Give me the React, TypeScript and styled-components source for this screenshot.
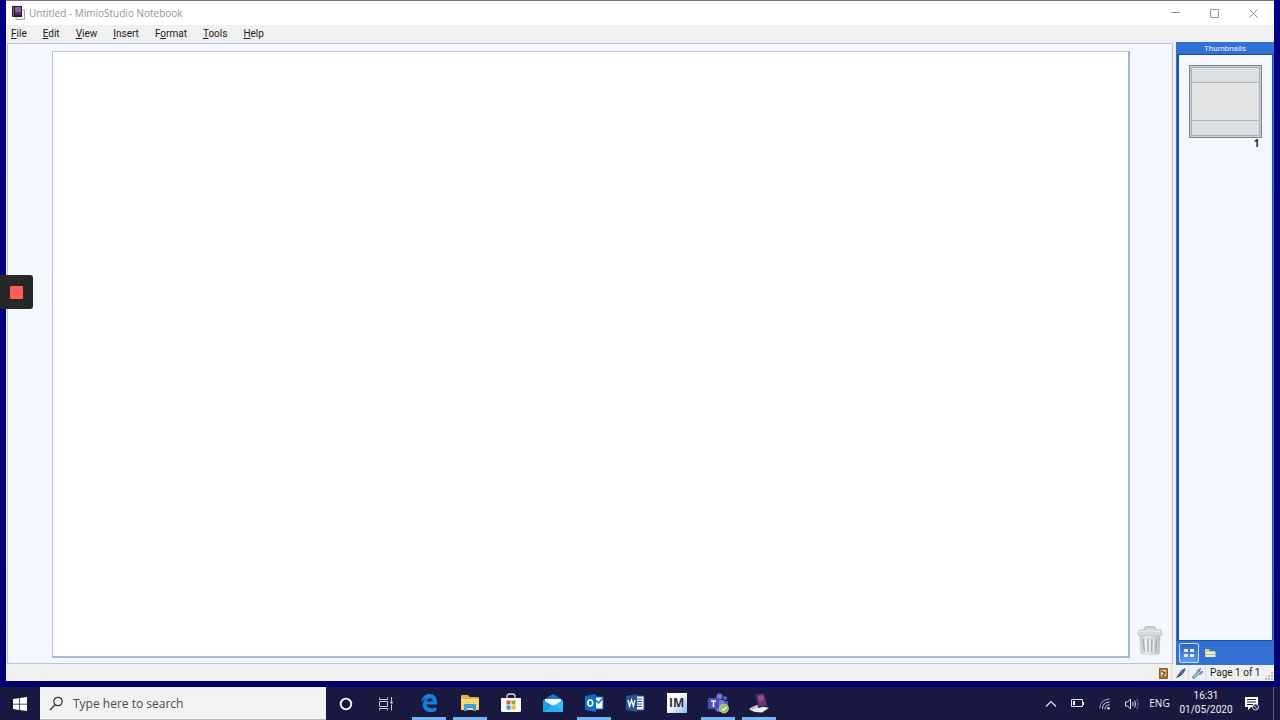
import React from 'react';
import styled, { createGlobalStyle } from 'styled-components';

const GlobalStyle = createGlobalStyle`
  *, *::before, *::after { box-sizing: border-box; }
  body { margin: 0; background: #000080; font-family: "Open Sans", "Noto Sans", sans-serif; }
  button { font: inherit; color: inherit; border: 0; padding: 0; background: none; }
  svg { display: block; flex: none; }
`;

const Desktop = styled.div`
  display: flex;
  flex-direction: column;
  height: 100vh;
  overflow: hidden;
  background: linear-gradient(#000086, #00007c 60%, #000070);
`;

const AppWindow = styled.main`
  flex: 1;
  min-height: 0;
  display: flex;
  flex-direction: column;
  margin: 0 6px 6px;
  border-top: 1px solid #77718a;
  background: #f0f0f0;
`;

const TitleBar = styled.header`
  flex: none;
  display: flex;
  align-items: center;
  height: 24px;
  padding: 0 1px 0 6px;
  background: #fff;
`;

const Title = styled.h1`
  flex: 1;
  margin: 0 0 0 3px;
  font: 400 10px/16px "Open Sans", sans-serif;
  color: #949494;
`;

const CaptionButton = styled.button`
  display: grid;
  place-items: center;
  width: 39px;
  height: 24px;
`;

const MenuBar = styled.nav`
  flex: none;
  display: flex;
  align-items: center;
  gap: 16px;
  height: 17px;
  padding-left: 5px;
`;

const MenuItem = styled.button`
  font: 400 10px/16px Roboto, sans-serif;
  color: #1c1c1c;
  u { text-underline-offset: 1px; }
`;

const Body = styled.div`
  flex: 1;
  min-height: 0;
  display: flex;
`;

const Workspace = styled.section`
  flex: 1;
  display: flex;
  margin: 1px 3px 1px 1px;
  border: 1px solid #b5c4e6;
  background: #f4f8fe;
`;

const Sheet = styled.div`
  flex: 1;
  margin: 7px 0 5px 44px;
  border: 1px solid #b3c3de;
  border-right: 2px solid #9fb5dc;
  border-bottom: 2px solid #a5b9dc;
  background: #fff;
`;

const Gutter = styled.div`
  display: flex;
  align-items: flex-end;
  width: 42px;
  padding: 0 0 6px 7px;
`;

const Panel = styled.aside`
  flex: none;
  display: flex;
  flex-direction: column;
  width: 98px;
  padding: 0 1px;
  background: #3370d4;
`;

const PanelTitle = styled.h2`
  height: 12px;
  margin: 0;
  text-align: center;
  font: 400 8px/14px Roboto, sans-serif;
  color: #f0f6ff;
`;

const PageList = styled.div`
  flex: 1;
  padding: 10px;
  border: 1px solid #2450a8;
  border-left-width: 2px;
  border-top-color: #2349a0;
  background: #f4f8fe;
`;

const Thumb = styled.button`
  display: block;
  width: 73px;
  text-align: right;
  font: 700 10px/10px "Open Sans", sans-serif;
  color: #1c1c1c;
`;

const ThumbFrame = styled.span`
  display: block;
  height: 73px;
  padding: 1px;
  border: 1px solid #7b8085;
  background: #cfd3d6;
`;

const ThumbPage = styled.span`
  display: grid;
  grid-template-rows: 15px 1fr 15px;
  height: 100%;
  border: 1px solid #9fb0bd;
  background: #e5e5e5;
`;

const ThumbBand = styled.span<{ $edge: 'top' | 'bottom' }>`
  background: #dbdfe2;
  grid-row: ${(p) => (p.$edge === 'top' ? 1 : 3)};
  border-${(p) => (p.$edge === 'top' ? 'bottom' : 'top')}: 1px solid #a9b9c6;
`;

const PanelTabs = styled.div`
  flex: none;
  display: flex;
  align-items: center;
  gap: 1px;
  height: 24px;
  padding-left: 2px;
`;

const PanelTab = styled.button<{ $active?: boolean }>`
  display: grid;
  place-items: center;
  width: 20px;
  height: 20px;
  border: 1px solid ${(p) => (p.$active ? '#c3dafa' : 'transparent')};
  border-radius: 2px;
  background: ${(p) => (p.$active ? 'linear-gradient(#2f63bd, #5f9cec)' : 'none')};
`;

const StatusBar = styled.footer`
  flex: none;
  display: flex;
  align-items: center;
  justify-content: flex-end;
  height: 16px;
`;

const StatusCell = styled.span`
  display: grid;
  place-items: center;
  width: 17px;
  height: 14px;
  border-right: 1px solid #dcdcdc;
`;

const PageCount = styled.span`
  width: 56px;
  padding-left: 4px;
  white-space: nowrap;
  font: 400 10px/14px Roboto, sans-serif;
  color: #1c1c1c;
`;

const Recorder = styled.button`
  position: absolute;
  left: 0;
  top: 275px;
  display: grid;
  place-items: center;
  width: 33px;
  height: 34px;
  border-radius: 0 3px 3px 0;
  background: #262827;
`;

const RecordMark = styled.span`
  width: 13px;
  height: 13px;
  border-radius: 1px;
  background: #ff5c5c;
`;

const Taskbar = styled.footer`
  flex: none;
  display: flex;
  height: 33px;
  background: #181840;
  color: #f0f0f6;
`;

const TaskButton = styled.button`
  display: grid;
  place-items: center;
  width: 40px;
`;

const Search = styled.label`
  display: flex;
  align-items: center;
  gap: 9px;
  width: 286px;
  padding-left: 9px;
  border-bottom: 1px solid #b8b8b8;
  background: #f2f2f2;
`;

const SearchInput = styled.input`
  flex: 1;
  min-width: 0;
  padding: 2px 0 0;
  border: 0;
  outline: 0;
  background: none;
  font: 400 12px/18px "Open Sans", sans-serif;
  &::placeholder { color: #4a4a4a; opacity: 1; }
`;

const AppStrip = styled.nav`
  display: flex;
  width: 372px;
  margin-left: 2px;
`;

const AppButton = styled.button<{ $running?: boolean }>`
  flex: 1;
  display: flex;
  flex-direction: column;
  align-items: center;
  justify-content: space-between;
  padding-top: 5px;
  &::after {
    content: '';
    width: 34px;
    height: 3px;
    background: ${(p) => (p.$running ? '#76b4f5' : 'transparent')};
  }
`;

const Tray = styled.div`
  display: flex;
  align-items: stretch;
  margin-left: auto;
  padding-right: 3px;
`;

const TrayButton = styled.button<{ $w?: number }>`
  display: grid;
  place-items: center;
  width: ${(p) => p.$w ?? 27}px;
  font: 400 10px/15px "Open Sans", sans-serif;
`;

const Clock = styled.time`
  width: 64px;
  padding-top: 2px;
  text-align: center;
  font: 400 10px/14px Roboto, sans-serif;
`;

const ShowDesktop = styled.button`
  width: 4px;
  margin-left: 8px;
  border-left: 1px solid #55557a;
`;

const Tile = ({ children, size = 22 }: { children: React.ReactNode; size?: number }) => (
  <svg width={size} height={size} viewBox="0 0 22 22" aria-hidden="true">{children}</svg>
);

const NotebookIcon = () => (
  <svg width="14" height="14" viewBox="0 0 14 14" aria-hidden="true">
    <path d="M4 4h8.500v9.500H4z" fill="#eee" stroke="#a9a6b0" />
    <path d="M0 1q0-1 1-1h9v11H1q-1 0-1-1z" fill="#291c35" />
    <path d="M3 1h6v5H3z" fill="#89639b" />
    <path d="M3 6h6v3H3z" fill="#513663" />
    <path d="M1.500 1v9" stroke="#776586" />
  </svg>
);

const TrashIcon = () => (
  <svg width="26" height="32" viewBox="0 0 26 32" aria-hidden="true">
    <defs>
      <linearGradient id="bin" x1="0" x2="1">
        <stop offset="0" stopColor="#c3c8c9" />
        <stop offset=".35" stopColor="#e7eaea" />
        <stop offset="1" stopColor="#bcc1c3" />
      </linearGradient>
    </defs>
    <path d="M8 4V3.500Q8 2 10 2h6q2 0 2 1.500V4" fill="none" stroke="#b0b5b6" strokeWidth="1.300" />
    <path d="M2.500 10h21l-1 19q-9.500 2.500-19 0z" fill="url(#bin)" />
    <path d="M2 5q11-2 22 0l1 5.500H1z" fill="#d6dadb" stroke="#bcc2c4" strokeWidth=".7" />
    <path d="M3 6.500q10-1.500 20 0" stroke="#f2f4f4" fill="none" />
    <path d="M6.500 14l.8 12M11 14l.2 13M15 14l-.2 13M19.500 14l-.8 12" stroke="#a0a7a9" strokeWidth="1.300" />
    <path d="M8 14l.6 12M12.500 14v13M16.500 14l-.3 12.500" stroke="#f3f5f5" />
  </svg>
);

const EdgeIcon = () => (
  <Tile>
    <path d="M3 10.500C3.800 5.200 7 2 11.300 2c5 0 7.800 3.400 7.800 8.300v2.200H8.700c.2 2.500 2.300 3.800 5 3.800 1.800 0 3.400-.4 4.700-1.300v3.700c-1.600.9-3.500 1.300-5.700 1.300-4.800 0-8-2.700-8-7.300 0-3 1.500-5.300 4.200-6.500C6.300 6.700 4.400 8.300 3 10.500zM8.800 9.500h6c0-2-.9-3.200-2.800-3.200-1.700 0-2.900 1.200-3.200 3.200z" fill="#1681dc" />
  </Tile>
);

const ExplorerIcon = () => (
  <Tile>
    <path d="M2 4q0-1 1-1h6l1.500 2H19q1 0 1 1v11H2z" fill="#e8b33f" />
    <path d="M2 7h18v11H2z" fill="#fbd56f" />
    <path d="M2 7h18v1H2z" fill="#ffe49a" />
    <path d="M5 19v-6q0-1 1-1h10q1 0 1 1v6h-3v-3H8v3z" fill="#3f9fdc" />
  </Tile>
);

const StoreIcon = () => (
  <Tile>
    <path d="M7 7V4.500Q7 2 9.500 2h3Q15 2 15 4.500V7" fill="none" stroke="#d6d6df" strokeWidth="1.300" />
    <path d="M1 6h20v12.500q0 1.500-1.500 1.500h-17Q1 20 1 18.500z" fill="#fafafa" />
    <path d="M6.500 8.500h4v4h-4z" fill="#e9572f" />
    <path d="M11.500 8.500h4v4h-4z" fill="#83b735" />
    <path d="M6.500 13.500h4v4h-4z" fill="#2b9fe0" />
    <path d="M11.500 13.500h4v4h-4z" fill="#f9b52d" />
  </Tile>
);

const MailIcon = () => (
  <Tile>
    <path d="M1 8l10-6 10 6v11H1z" fill="#1478c4" />
    <path d="M3 7h16v7H3z" fill="#f4f9fd" />
    <path d="M1 8l10 6-9 6H1z" fill="#1b9ce2" />
    <path d="M21 8l-10 6 9 6h1z" fill="#36bdf2" />
    <path d="M1 20l10-7 10 7z" fill="#28b0ee" />
  </Tile>
);

const OutlookIcon = () => (
  <Tile>
    <path d="M10 5h10v12H10z" fill="#f5f9fd" stroke="#0c72c6" />
    <path d="M10.500 6l5 5 4.500-5" fill="none" stroke="#0c72c6" strokeWidth="1.500" />
    <path d="M2 4l11-2v18L2 18z" fill="#0d70c4" />
    <ellipse cx="7.300" cy="11" rx="2.400" ry="3" fill="none" stroke="#fff" strokeWidth="1.600" />
  </Tile>
);

const WordIcon = () => (
  <Tile>
    <path d="M11 4h9v14h-9z" fill="#f7f9fc" stroke="#2b579a" />
    <path d="M12 7h6M12 9.500h6M12 12h6M12 14.500h6" stroke="#2b579a" />
    <path d="M2 4l11-2v18L2 18z" fill="#295293" />
    <path d="M4 8l1.600 6.200L7.500 8l1.900 6.200L11 8" fill="none" stroke="#fff" strokeWidth="1.300" />
  </Tile>
);

const ImBadge = styled.span`
  display: grid;
  place-items: center;
  width: 20px;
  height: 20px;
  margin-top: 1px;
  background: linear-gradient(135deg, #fff 40%, #8fb2e8);
  font: 700 12px/20px "Open Sans", sans-serif;
  color: #2d2d3c;
`;

const TeamsIcon = () => (
  <Tile>
    <circle cx="18" cy="6" r="2" fill="#5b64c4" />
    <circle cx="12.500" cy="4.500" r="3" fill="#7178d6" />
    <path d="M15 9h6v6q-1 3-5 3z" fill="#4c56b5" />
    <path d="M7 8h10v7q-1 5-5 5-4-1-5-5z" fill="#7178d6" />
    <rect x="1" y="6" width="11" height="11" rx="1" fill="#4850b4" />
    <path d="M4 9h5M6.500 9v6" stroke="#fff" strokeWidth="1.500" />
    <circle cx="17" cy="16.500" r="4.500" fill="#92c353" stroke="#e5f0d3" strokeWidth=".6" />
    <path d="M14.800 16.600l1.600 1.600 3-3.200" fill="none" stroke="#fff" strokeWidth="1.300" />
  </Tile>
);

const MimioIcon = () => (
  <Tile>
    <path d="M1 17l8-4 12 3-7 4.500q-9 0-13-3.500z" fill="#f0eef2" />
    <path d="M2 16l7-3v3l-5 2z" fill="#c6c2cd" />
    <path d="M7 2.500L16 1l4 13-10 2z" fill="#472354" />
    <path d="M9 3.500L15.500 2.300l3 10.500-7.500 1.500z" fill="#6b3674" />
    <path d="M10 4l5-1 1.500 5-5.500 2z" fill="#85508c" />
  </Tile>
);

const menus: [string, string, string][] = [
  ['', 'F', 'ile'], ['', 'E', 'dit'], ['', 'V', 'iew'], ['', 'I', 'nsert'],
  ['F', 'o', 'rmat'], ['', 'T', 'ools'], ['', 'H', 'elp'],
];

const apps: { name: string; icon: React.ReactNode; running?: boolean }[] = [
  { name: 'Microsoft Edge', icon: <EdgeIcon />, running: true },
  { name: 'File Explorer', icon: <ExplorerIcon />, running: true },
  { name: 'Microsoft Store', icon: <StoreIcon /> },
  { name: 'Mail', icon: <MailIcon /> },
  { name: 'Outlook', icon: <OutlookIcon />, running: true },
  { name: 'Word', icon: <WordIcon /> },
  { name: 'IM', icon: <ImBadge>IM</ImBadge> },
  { name: 'Teams', icon: <TeamsIcon />, running: true },
  { name: 'MimioStudio', icon: <MimioIcon />, running: true },
];

export default function App() {
  return (
    <Desktop>
      <GlobalStyle />
      <AppWindow>
        <TitleBar>
          <NotebookIcon />
          <Title>Untitled - MimioStudio Notebook</Title>
          <CaptionButton aria-label="Minimize">
            <svg width="9" height="9" viewBox="0 0 9 9"><path d="M0 3.500h9" stroke="#999" /></svg>
          </CaptionButton>
          <CaptionButton aria-label="Maximize">
            <svg width="9" height="9" viewBox="0 0 9 9"><path d="M.5 .5h8v8h-8z" fill="none" stroke="#999" /></svg>
          </CaptionButton>
          <CaptionButton aria-label="Close">
            <svg width="9" height="9" viewBox="0 0 9 9"><path d="M.5 .5l8 8M8.500 .5l-8 8" stroke="#888" /></svg>
          </CaptionButton>
        </TitleBar>
        <MenuBar>
          {menus.map(([before, key, after]) => (
            <MenuItem key={before + key + after}>{before}<u>{key}</u>{after}</MenuItem>
          ))}
        </MenuBar>
        <Body>
          <Workspace>
            <Sheet />
            <Gutter><TrashIcon /></Gutter>
          </Workspace>
          <Panel>
            <PanelTitle>Thumbnails</PanelTitle>
            <PageList>
              <Thumb>
                <ThumbFrame>
                  <ThumbPage>
                    <ThumbBand $edge="top" />
                    <ThumbBand $edge="bottom" />
                  </ThumbPage>
                </ThumbFrame>
                1&nbsp;
              </Thumb>
            </PageList>
            <PanelTabs>
              <PanelTab $active aria-label="Thumbnails">
                <svg width="10" height="10" viewBox="0 0 10 10">
                  <path d="M0 1h4v3H0zM6 1h4v3H6zM0 6h4v3H0zM6 6h4v3H6z" fill="#e6ecd9" />
                </svg>
              </PanelTab>
              <PanelTab aria-label="Gallery">
                <svg width="11" height="10" viewBox="0 0 11 10">
                  <path d="M0 1h4l1 2h5v6H0z" fill="#d9c98a" />
                  <path d="M1 4h9.500v5H1z" fill="#f2ecc9" />
                  <path d="M1 6.500h9.500" stroke="#a4b8bd" />
                </svg>
              </PanelTab>
            </PanelTabs>
          </Panel>
        </Body>
        <StatusBar>
          <StatusCell>
            <svg width="9" height="11" viewBox="0 0 9 11">
              <path d="M.5 .5h8v10h-8z" fill="#b5772e" stroke="#8b5b25" />
              <path d="M2 2h5v6H2z" fill="#ead5a8" />
              <path d="M2.500 3l3.500 2-2.500 3" fill="none" stroke="#50413a" strokeWidth="1.200" />
            </svg>
          </StatusCell>
          <StatusCell>
            <svg width="11" height="11" viewBox="0 0 11 11">
              <path d="M10 .5Q6 2 3.500 7l1.500 1Q9.500 5 10 .5z" fill="#4c74b8" stroke="#27406e" strokeWidth=".8" />
              <path d="M3.500 7L.5 10.500 5 8" fill="#222" />
            </svg>
          </StatusCell>
          <StatusCell>
            <svg width="11" height="11" viewBox="0 0 11 11">
              <path d="M9 .7L7 2.800l1 1.400 2.500-.8Q10.300 6 8 6.300q-.8.100-1.400-.2L2.500 10.300q-1 .5-1.700-.3-.5-.8 0-1.500L5 4.600Q4.700 1.400 9 .7z" fill="#a6c3e6" stroke="#3c5f8a" strokeWidth=".8" />
            </svg>
          </StatusCell>
          <PageCount>Page 1 of 1</PageCount>
          <svg width="12" height="15" viewBox="0 0 12 15" aria-hidden="true">
            <path d="M9 6h2v2H9zM9 9h2v2H9zM6 9h2v2H6zM9 12h2v2H9zM6 12h2v2H6zM3 12h2v2H3z" fill="#b9b9b9" />
          </svg>
        </StatusBar>
      </AppWindow>

      <Taskbar>
        <TaskButton aria-label="Start">
          <svg width="14" height="14" viewBox="0 0 14 14">
            <path d="M0 2l6-.8v5.500H0zM6.700 1.100L14 0v6.700H6.700zM0 7.400h6v5.500L0 12zM6.700 7.400H14V14l-7.300-1z" fill="#fff" />
          </svg>
        </TaskButton>
        <Search>
          <svg width="15" height="15" viewBox="0 0 15 15" aria-hidden="true">
            <circle cx="9" cy="5.500" r="4.200" fill="none" stroke="#333" strokeWidth="1.200" />
            <path d="M6 8.800L1 14" stroke="#333" strokeWidth="1.300" />
          </svg>
          <SearchInput aria-label="Search" placeholder="Type here to search" />
        </Search>
        <TaskButton aria-label="Cortana">
          <svg width="14" height="14" viewBox="0 0 14 14">
            <circle cx="7" cy="7" r="5.300" fill="none" stroke="#fff" strokeWidth="1.800" />
          </svg>
        </TaskButton>
        <TaskButton aria-label="Task view">
          <svg width="14" height="14" viewBox="0 0 14 14" fill="none" stroke="#c9c9d6">
            <path d="M.5 .5v2h8v-2M.5 4.500h8v5h-8zM.5 13.500v-2h8v2M12.500 0v4M12.500 7.500v6" />
            <path d="M11.500 4.500h2v2h-2z" fill="#fff" stroke="none" />
          </svg>
        </TaskButton>
        <AppStrip>
          {apps.map((app) => (
            <AppButton key={app.name} $running={app.running} aria-label={app.name}>{app.icon}</AppButton>
          ))}
        </AppStrip>
        <Tray>
          <TrayButton aria-label="Show hidden icons">
            <svg width="12" height="8" viewBox="0 0 12 8"><path d="M1 6.500l5-5 5 5" fill="none" stroke="#e4e4ee" strokeWidth="1.200" /></svg>
          </TrayButton>
          <TrayButton aria-label="Battery">
            <svg width="13" height="9" viewBox="0 0 13 9">
              <path d="M.5 .5h11v7H.5z" fill="none" stroke="#e4e4ee" />
              <path d="M2 2h2v4H2zM12 3h1v3h-1z" fill="#fff" />
            </svg>
          </TrayButton>
          <TrayButton aria-label="Network">
            <svg width="12" height="12" viewBox="0 0 12 12" fill="none" stroke="#d5d5e2">
              <path d="M.8 10.500Q1 1.500 10.500 1.200" stroke="#a5a5bb" />
              <path d="M3.400 11Q3.500 4.300 10.500 4M6 11.300Q6.200 7 10.500 6.700" />
              <circle cx="9.500" cy="10.200" r="1.200" fill="#fff" stroke="none" />
            </svg>
          </TrayButton>
          <TrayButton aria-label="Volume">
            <svg width="14" height="12" viewBox="0 0 14 12" fill="none" stroke="#e4e4ee">
              <path d="M.5 4h2l3-3v10l-3-3h-2z" />
              <path d="M7.500 4q1.300 2 0 4M9.500 2.500q2.200 3.500 0 7" />
              <path d="M11.500 1q3.200 5 0 10" stroke="#77779a" />
            </svg>
          </TrayButton>
          <TrayButton $w={29}>ENG</TrayButton>
          <Clock>16:31<br />01/05/2020</Clock>
          <TrayButton aria-label="Notifications">
            <svg width="15" height="15" viewBox="0 0 15 15">
              <path d="M1 1h13v10H7l-3 3v-3H1z" fill="#fff" />
              <path d="M3 3.500h9M3 6h9M3 8.500h6" stroke="#181840" />
              <circle cx="11.500" cy="11" r="3" fill="#181840" stroke="#fff" strokeWidth=".8" />
              <path d="M10 9.500l3 3" stroke="#fff" />
            </svg>
          </TrayButton>
          <ShowDesktop aria-label="Show desktop" />
        </Tray>
      </Taskbar>

      <Recorder aria-label="Stop recording"><RecordMark /></Recorder>
    </Desktop>
  );
}
